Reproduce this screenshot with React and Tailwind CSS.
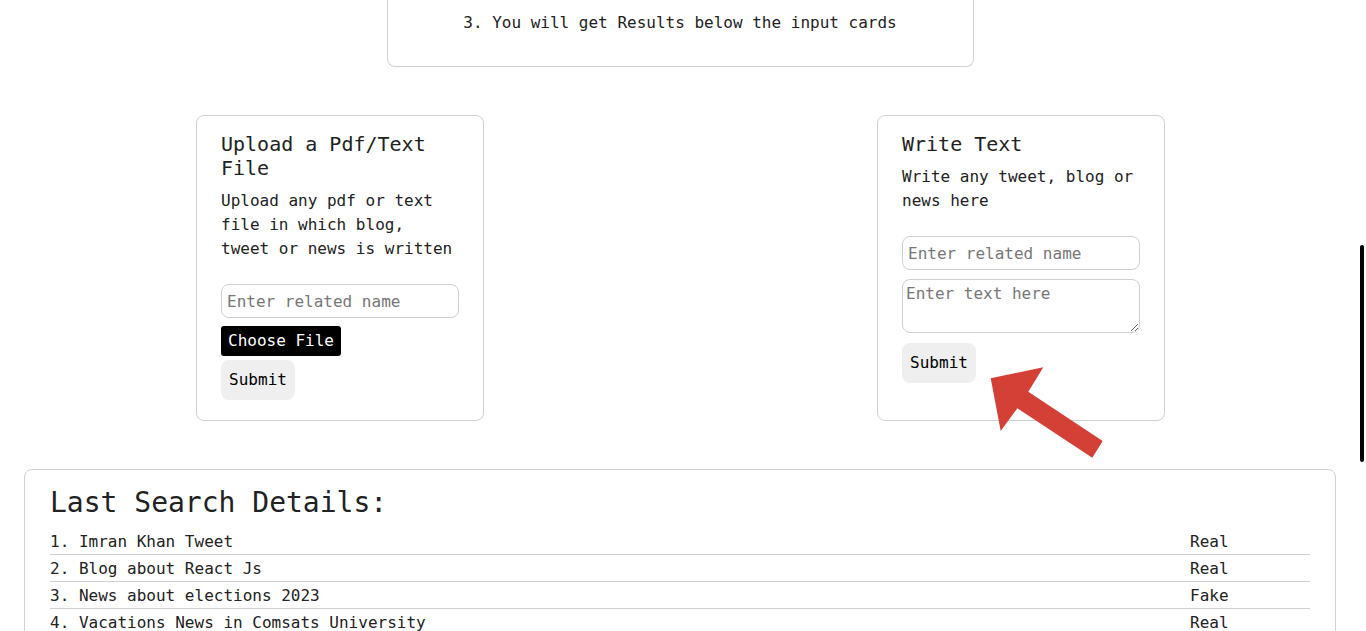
import React from 'react';

const rows = [
    { name: '1. Imran Khan Tweet', result: 'Real' },
    { name: '2. Blog about React Js', result: 'Real' },
    { name: '3. News about elections 2023', result: 'Fake' },
    { name: '4. Vacations News in Comsats University', result: 'Real' },
];

const mono = { fontFamily: '"DejaVu Sans Mono", "Liberation Mono", monospace' };

const SubmitButton = () => (
    <button className="h-[40px] w-[74px] rounded-lg bg-[#efefef] text-base text-black">
        Submit
    </button>
);

const Arrow = () => (
    // red pointer over the "Write Text" submit button
    <svg className="absolute left-[986px] top-[362px]" width="122" height="100" viewBox="986 362 122 100">
        <polygon
            fill="#d44035"
            points="990.7,378.3 1043.3,367.3 1028.3,391.7 1102.7,441 1092.3,457.7 1017.3,408.3 1000.7,431"
        />
    </svg>
);

export default function App() {
    return (
        <div className="relative min-h-screen w-[1360px] bg-white text-[#222]" style={mono}>
            {/* top instructions card, scrolled mostly off screen */}
            <div className="flex justify-center">
                <div className="-mt-[20px] w-[587px] rounded-b-lg border border-t-0 border-[#d0d0d0] pb-[31px] pt-[31px] text-center text-base leading-6">
                    3. You will get Results below the input cards
                </div>
            </div>

            <div className="mt-[48px] flex justify-between pl-[196px] pr-[195px]">
                {/* upload card */}
                <div className="flex w-[288px] flex-col rounded-lg border border-[#d0d0d0] px-[24px] pb-[20px] pt-[16px]">
                    <h2 className="text-xl leading-6">Upload a Pdf/Text File</h2>
                    <p className="mt-[9px] text-base leading-6">
                        Upload any pdf or text file in which blog, tweet or news is written
                    </p>
                    <input
                        className="mt-[23px] h-[34px] w-full rounded-lg border border-[#cfcfcf] px-[5px] text-base placeholder:text-[#777] outline-none"
                        placeholder="Enter related name"
                    />
                    <div className="mt-[8px] flex">
                        <span className="rounded-[3px] bg-black px-[7px] py-[3px] text-base leading-6 text-white">
                            Choose File
                        </span>
                    </div>
                    <div className="mt-[4px]">
                        <SubmitButton />
                    </div>
                </div>

                {/* write text card */}
                <div className="flex w-[288px] flex-col rounded-lg border border-[#d0d0d0] px-[24px] pb-[20px] pt-[16px]">
                    <h2 className="text-xl leading-6">Write Text</h2>
                    <p className="mt-[9px] text-base leading-6">Write any tweet, blog or news here</p>
                    <input
                        className="mt-[23px] h-[34px] w-full rounded-lg border border-[#cfcfcf] px-[5px] text-base placeholder:text-[#777] outline-none"
                        placeholder="Enter related name"
                    />
                    <textarea
                        className="mt-[9px] h-[54px] w-full rounded-lg border border-[#cfcfcf] px-[3px] py-[2px] text-base leading-6 placeholder:text-[#777] outline-none"
                        placeholder="Enter text here"
                    />
                    <div className="mt-[10px]">
                        <SubmitButton />
                    </div>
                </div>
            </div>

            {/* results */}
            <div className="mx-[24px] mt-[48px] rounded-lg border border-[#d0d0d0] px-[25px] pb-4 pt-[16px]">
                <h1 className="text-[28px] leading-[34px]">Last Search Details:</h1>
                <div className="mt-[8px]">
                    {rows.map((row) => (
                        <div key={row.name} className="flex border-b border-[#cfcfcf] pt-[2px] text-base leading-6">
                            <span className="flex-1">{row.name}</span>
                            <span className="w-[120px]">{row.result}</span>
                        </div>
                    ))}
                </div>
            </div>

            <Arrow />

            {/* overlay scrollbar thumb */}
            <div className="fixed right-[2px] top-[245px] h-[217px] w-[4px] rounded-full bg-black" />
        </div>
    );
}
